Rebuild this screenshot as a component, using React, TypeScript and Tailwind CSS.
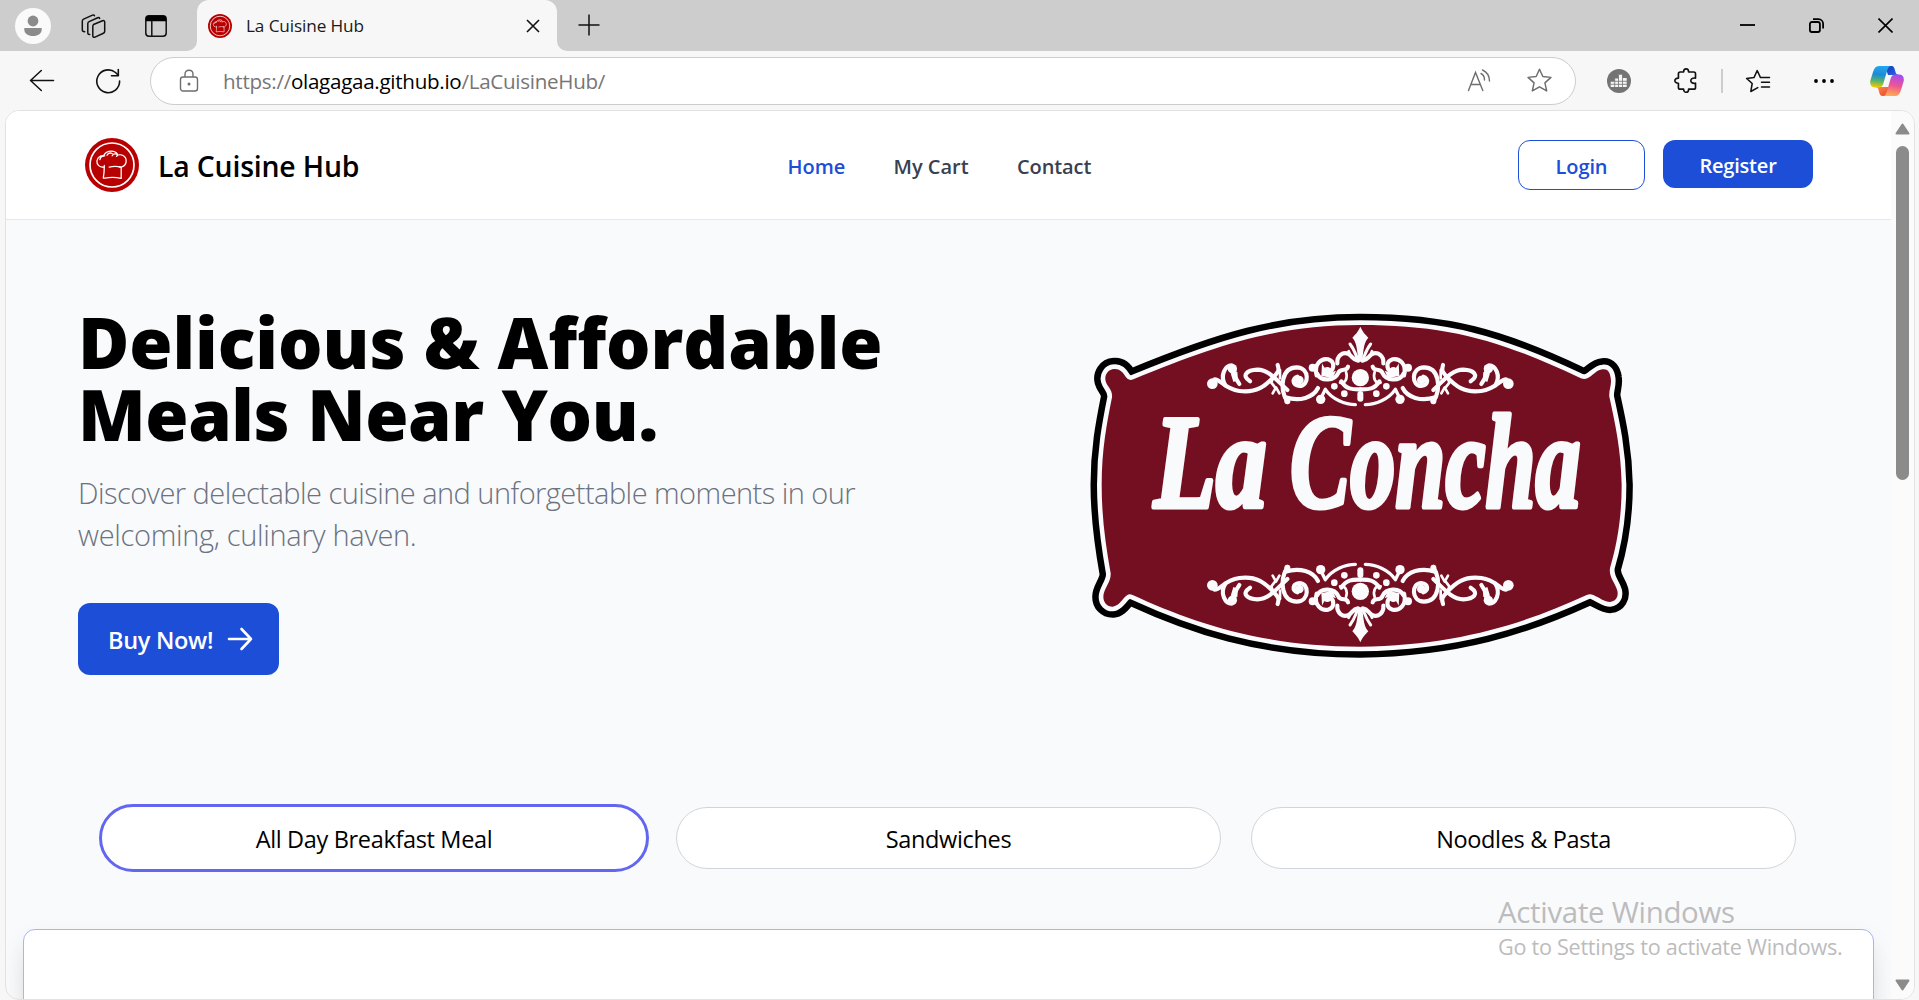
import type { ReactNode } from "react";

function ChefLogo({ className }: { className: string }) {
  return (
    <svg viewBox="0 0 54 54" className={className} fill="none">
      <circle cx="27" cy="27" r="27" fill="#b90000" />
      <circle cx="27" cy="27" r="22" stroke="#fff" strokeWidth="1.700" />
      <g stroke="#fff" strokeWidth="1.300" strokeLinecap="round" strokeLinejoin="round">
        <path d="M19 29.200c-4.500.4-7.400-2.600-7.100-6.100.3-3.800 3.900-6.200 7.800-5.200-2.600.1-4.300 1.600-4.800 3.600" />
        <path d="M18.500 17.800c1.600-3.300 4.700-4.700 8-4.700 3.200 0 5 1.400 6.200 3.400-2.600-1-4.800-.2-5.500 1.300" />
        <path d="M22 17.200c1-2 3.200-2.600 5.200-1.700M31.500 18.300c1.500-1.700 4.600-2 6.900-.5 4.200 2.800 3.500 9.600-1.600 11-1.700.4-2.600.1-2.600.1" />
        <path d="M19.300 27.500c0 5.500-.2 8.500-1 12.600h1.600c5-1 10.500-1 16.300.2V29.200c-4.200-1-8.300-1-12 0" />
      </g>
    </svg>
  );
}

function TitleBar() {
  return (
    <div className="flex h-[51px] shrink-0 items-center bg-[#cdcdcd]">
      <svg viewBox="0 0 36 36" className="ml-[15px] size-9">
        <circle cx="18" cy="18" r="18" fill="#fafafa" />
        <circle cx="18" cy="13" r="5.400" fill="#8b8b8b" />
        <path d="M9.300 20h17.400v1.500c0 4-3.700 6.500-8.700 6.500s-8.700-2.500-8.700-6.500z" fill="#8b8b8b" />
      </svg>
      <svg viewBox="0 0 26 26" className="ml-[29px] size-[26px]" fill="none" stroke="#111" strokeWidth="1.500" strokeLinejoin="round" strokeLinecap="round">
        <path d="M13.500 11.500 22.500 7.700q2.200-.6 2.200 1.500v9q0 1.500-1.300 2.100l-8.400 3.800q-2.200.8-2.200-1.400v-8.900q0-1.600.7-2.300z" />
        <path d="M9.800 21.400q-2 .3-2-1.700v-9q0-1.500 1.300-2.100l8.600-3.900q1.600-.5 2 .7" />
        <path d="M4.700 18.800q-2.400 0-2.400-2V8.200q0-1.500 1.300-2.100l8.900-4q1.500-.5 2 .6" />
      </svg>
      <svg viewBox="0 0 22 22" className="ml-[39px] size-[22px]" fill="none">
        <rect x=".8" y=".8" width="20.400" height="20.400" rx="3.200" stroke="#111" strokeWidth="1.500" />
        <path d="M.8 6.300V4A3.200 3.200 0 0 1 4 .8h14A3.200 3.200 0 0 1 21.200 4v2.300z" fill="#000" />
        <path d="M6.800 6v15" stroke="#111" strokeWidth="1.500" />
      </svg>
      <div className="ml-[20px] flex h-full items-end">
        <svg viewBox="0 0 10 10" className="size-[10px]"><path d="M10 0v10H0A10 10 0 0 0 10 0z" fill="#f7f7f7" /></svg>
        <div className="flex h-full w-[360px] items-center rounded-t-[12px] bg-[#f7f7f7] pr-[17px] pl-[11px]">
          <ChefLogo className="size-6" />
          <span className="ml-[14px] text-[17.200px] tracking-[-0.120px] text-[#1a1a1a]">La Cuisine Hub</span>
          <svg viewBox="0 0 14 14" className="ml-auto size-[14px]" stroke="#111" strokeWidth="1.600"><path d="m1 1 12 12M13 1 1 13" /></svg>
        </div>
        <svg viewBox="0 0 10 10" className="size-[10px]"><path d="M0 0v10h10A10 10 0 0 1 0 0z" fill="#f7f7f7" /></svg>
      </div>
      <svg viewBox="0 0 22 22" className="mb-[2px] ml-[11px] size-[22px]" stroke="#111" strokeWidth="1.500"><path d="M11 .5v21M.5 11h21" /></svg>
      <div className="mr-[26px] ml-auto flex items-center gap-[54px]">
        <svg viewBox="0 0 15 15" className="size-[15px]" stroke="#000" strokeWidth="1.800"><path d="M0 7h15" /></svg>
        <svg viewBox="0 0 15 15" className="size-[15px]" fill="none" stroke="#000" strokeWidth="1.800">
          <rect x=".9" y="4" width="10" height="10" rx="2" />
          <path d="M4 1.200h5.500a4.700 4.700 0 0 1 4.600 4.600V10.500" />
        </svg>
        <svg viewBox="0 0 15 15" className="size-[15px]" stroke="#000" strokeWidth="1.600"><path d="m.5.500 14 14M14.500.500l-14 14" /></svg>
      </div>
    </div>
  );
}

const STAR = "M12 1.200 15.200 8.200 23 9 17.200 14.300 18.900 22 12 18.100 5.100 22 6.800 14.300 1 9 8.800 8.200z";

function Toolbar() {
  return (
    <div className="flex h-[59px] shrink-0 items-center bg-[#f7f7f7]">
      <svg viewBox="0 0 26 24" className="ml-[29px] h-6 w-[26px]" fill="none" stroke="#111" strokeWidth="1.500" strokeLinecap="round" strokeLinejoin="round">
        <path d="M24.500 11.500h-23M12.300 1.500 1.500 11.500l10.800 10" />
      </svg>
      <svg viewBox="0 0 26 26" className="ml-[40px] size-[26px]" fill="none" stroke="#111" strokeWidth="1.600" strokeLinecap="round" strokeLinejoin="round">
        <path d="M24.600 13A11.400 11.400 0 1 1 20.500 4.500L23.300 7.300" />
        <path d="M23.300 1.500v6.200h-6.800" />
      </svg>
      <div className="ml-[29px] flex h-[48px] w-[1426px] items-center rounded-full border-[1.500px] border-[#cdcdcd] bg-white">
        <svg viewBox="0 0 20 24" className="ml-[28px] h-6 w-5" fill="none" stroke="#6e6e6e" strokeWidth="1.400">
          <rect x="1.500" y="8" width="17" height="14" rx="2.500" />
          <path d="M6 8V5.200C6 2.800 7.700 1.200 10 1.200s4 1.600 4 4V8" />
          <circle cx="10" cy="15" r="1.500" fill="#6e6e6e" stroke="none" />
        </svg>
        <div className="mt-[2px] ml-[24px] flex text-[20.600px] tracking-[-0.290px] whitespace-nowrap text-[#767676]">
          <span>https://</span><span className="text-black">olagagaa.github.io</span><span>/LaCuisineHub/</span>
        </div>
        <svg viewBox="0 0 24 24" className="ml-auto size-6" fill="none" stroke="#6e6e6e" strokeWidth="1.400" strokeLinecap="round">
          <path d="M1.500 21.500 8.500 3.500l7.300 18M4 15.500h9.400" />
          <path d="M14 4.500c2.500 1.200 3.500 3.200 3.500 6.500M15.500 1c4.300 1.900 6.800 5.500 7 11" />
        </svg>
        <svg viewBox="0 0 24 24" className="mr-[23px] ml-[36px] size-[25px]" fill="none" stroke="#6e6e6e" strokeWidth="1.400" strokeLinejoin="round"><path d={STAR} /></svg>
      </div>
      <svg viewBox="0 0 24 24" className="ml-[31px] size-6">
        <circle cx="12" cy="12" r="12" fill="#747474" />
        <path d="M3.700 18v-5.300h4V9.600h3.700V5.700h4v3.200h4.300V18z" fill="#f4f4f4" />
        <path d="M3.700 15.300h16.300M7.700 9v9.500M11.500 6v12.500M15.500 6v12.500M7.700 12.300H20" stroke="#747474" strokeWidth=".8" />
      </svg>
      <svg viewBox="0 0 24 24" className="ml-[42px] size-[25px]" fill="none" stroke="#111" strokeWidth="1.600" strokeLinejoin="round">
        <path d="M5.200 5.500q0-1.700 1.700-1.700h3.300c0-4 4.800-4 4.800 0h5q1.600 0 1.600 1.700v4.200c-6 -1-6 6 0 4.900v4q0 1.700-1.600 1.700H15c0 4-4.800 4-4.800 0H6.900q-1.700 0-1.700-1.700v-4c-4.500.2-4.500-5.100 0-4.900z" />
      </svg>
      <div className="ml-[23px] h-6 w-[2px] bg-[#cdcdcd]" />
      <svg viewBox="0 0 26 24" className="ml-[22px] h-6 w-[26px]" fill="none" stroke="#111" strokeWidth="1.500" strokeLinecap="round" strokeLinejoin="round">
        <path d="M17 8.600h-1.500L12.200 1.500 9 8.600l-7.400.8L7.200 14.500 5.800 22.500l7-3.900M17 8.600h7.500M16.500 13.300h8M16.500 18h8" />
      </svg>
      <svg viewBox="0 0 20 4" className="ml-[43px] h-1 w-5"><circle cx="2" cy="2" r="1.900" /><circle cx="10" cy="2" r="1.900" /><circle cx="18" cy="2" r="1.900" /></svg>
      <svg viewBox="0 0 34 30" className="ml-[36px] h-[30px] w-[34px]">
        <defs>
          <linearGradient id="cpA" x1=".5" y1="0" x2=".4" y2="1"><stop offset="0" stopColor="#22a7f0" /><stop offset=".4" stopColor="#1b8bd6" /><stop offset=".7" stopColor="#56b36a" /><stop offset="1" stopColor="#f7c900" /></linearGradient>
          <linearGradient id="cpB" x1=".6" y1="0" x2=".4" y2="1"><stop offset="0" stopColor="#a24cf0" /><stop offset=".5" stopColor="#ee5594" /><stop offset="1" stopColor="#ffae4e" /></linearGradient>
          <linearGradient id="cpC" x1="0" y1="0" x2="1" y2="1"><stop offset="0" stopColor="#1537b8" /><stop offset="1" stopColor="#2a6ae8" /></linearGradient>
          <linearGradient id="cpD" x1="0" y1="0" x2="1" y2="1"><stop offset="0" stopColor="#ff8d3c" /><stop offset="1" stopColor="#e8433a" /></linearGradient>
        </defs>
        <path d="M15 0h6c3 0 3.500 2 4.200 5 .5 2.300 1.300 3.500 3.800 4H18z" fill="url(#cpC)" />
        <path d="M8 21h11l-3 9h-3c-2.800 0-3.500-2-4-4.500-.4-2.300-1-4-3-4.500z" fill="url(#cpD)" />
        <path d="M9 0h12c-2 0-3 2-4 5l-3.500 12c-1 3.500-2.500 4.500-5 4.500H5c-3.500 0-5.600-2.500-4.600-7L3 6C4.300 2 5.800 0 9 0z" fill="url(#cpA)" />
        <path d="M25 30H13c2 0 3-2 4-5l3.500-12c1-3.500 2.500-4.500 5-4.500H29c3.500 0 5.600 2.500 4.600 7L31 24c-1.300 4-2.800 6-6 6z" fill="url(#cpB)" />
      </svg>
    </div>
  );
}

function SiteHeader() {
  return (
    <header className="flex h-[109px] items-center border-b border-[#e5e7eb] bg-white pr-[78px] pl-[79px]">
      <div className="flex w-[702.500px] items-center">
        <ChefLogo className="size-[54px]" />
        <span className="mt-[2px] ml-[19px] text-[28.400px] font-semibold tracking-[-0.180px] text-black">La Cuisine Hub</span>
      </div>
      <nav className="mt-[3px] flex gap-[46px] text-[20px] font-semibold whitespace-nowrap text-[#374151]">
        <a className="w-[60px] text-[#1d4ed8]">Home</a>
        <a className="w-[77.500px]">My Cart</a>
        <a className="tracking-[-0.100px]">Contact</a>
      </nav>
      <div className="ml-auto flex items-start gap-[18px] text-[20px] font-semibold">
        <a className="flex h-[50px] w-[127px] items-center justify-center rounded-xl border border-[#1d4ed8] pt-[3px] tracking-[-0.100px] text-[#1d4ed8]">Login</a>
        <a className="flex h-[48px] w-[150px] items-center justify-center rounded-xl bg-[#1d4ed8] pt-[3px] tracking-[-0.200px] text-white">Register</a>
      </div>
    </header>
  );
}

function OrnamentHalf() {
  return (
    <g transform="translate(360 30)" fill="none" stroke="#fbfbfd" strokeWidth="12.500" strokeLinecap="round" strokeLinejoin="round">
      <path d="M44 208C62 208 72 236 118 243 170 250 196 228 222 200 236 184 238 182 233 165" />
      <path d="M76 226C58 196 76 166 95 166" />
      <path d="M98 172C110 184 98 198 108 206 L118 222" />
      <path d="M150 214C122 196 142 180 172 179 206 180 226 206 262 240" />
      <path d="M222 196 214 218 228 236M218 250 228 232 238 250M240 180 240 205" strokeWidth="8" />
      <path d="M262 276C236 232 246 172 290 172 330 174 328 228 298 228 276 226 276 204 292 200" />
      <path d="M256 262C300 276 340 262 354 234" />
      <path d="M350 196C340 160 366 144 384 148 404 154 404 176 390 184" />
      <path d="M352 192C364 216 404 212 414 190 422 170 440 188 444 170" />
      <path d="M412 160C410 138 428 124 446 132 460 142 458 150 474 152" />
      <path d="M362 266 376 238C396 268 436 284 466 284" strokeWidth="10" />
      <path d="M424 214C440 240 460 238 480 238" />
      <path d="M438 186C444 204 436 222 420 218" strokeWidth="8" />
      <path d="M474 150C468 136 464 120 450 102M476 150C462 148 450 138 446 124" strokeWidth="9" />
      <g fill="#fbfbfd" stroke="none">
        <circle cx="37" cy="221" r="16" /><circle cx="97" cy="176" r="14" /><circle cx="298" cy="210" r="13" />
        <circle cx="338" cy="173" r="12" /><circle cx="362" cy="268" r="14" /><circle cx="403" cy="229" r="10" />
        <circle cx="433" cy="251" r="10" /><circle cx="382" cy="184" r="13" /><circle cx="262" cy="274" r="9" />
        <path d="M366 160c10 22 24 30 42 22l-10 22-34-6zM92 190l20-4 2 24-14 6z" />
      </g>
    </g>
  );
}

function Ornament() {
  return (
    <g>
      <OrnamentHalf />
      <g transform="translate(1682 0) scale(-1 1)"><OrnamentHalf /></g>
      <path d="M841 80c8 18 16 24 24 33-10 12-14 22-18 72h-12c-4-50-8-60-18-72 8-9 16-15 24-33z" fill="#fbfbfd" />
      <circle cx="841" cy="233" r="26" fill="#fbfbfd" />
      <path d="M841 282v14" stroke="#fbfbfd" strokeWidth="18" strokeLinecap="round" />
    </g>
  );
}

const SIGN =
  "M840 75C600 75 420 130 160 238Q146 244 138 232C128 214 116 205 102 207 84 208 72 226 77 244 82 262 98 268 96 292 80 372 65 450 65 555 65 650 76 730 92 820 94 846 70 868 70 890 70 908 82 920 98 920 118 918 126 896 142 885Q148 880 158 885C330 964 540 1040 840 1040 1130 1036 1330 972 1520 885Q1530 880 1540 885C1560 894 1574 906 1590 906 1608 904 1616 890 1612 872 1604 846 1586 832 1590 804 1612 730 1625 650 1625 555 1623 450 1606 372 1588 290 1586 270 1596 254 1592 234 1590 216 1582 206 1568 208 1548 210 1538 228 1522 235Q1510 240 1496 232C1260 120 1100 75 840 75Z";

function ConchaSign() {
  return (
    <svg viewBox="0 0 1700 1110" className="h-[370px] w-[566.700px]">
      <path d={SIGN} fill="#000" stroke="#000" strokeWidth="67" strokeLinejoin="round" />
      <path d={SIGN} fill="#fff" stroke="#fbfbfd" strokeWidth="28" strokeLinejoin="round" />
      <path d={SIGN} fill="#730f20" />
      <Ornament />
      <g transform="translate(0 1107) scale(1 -1)"><Ornament /></g>
      <g className="[font-family:'Liberation_Serif',serif] text-[400px] font-bold italic" fill="#f9fafc" stroke="#f9fafc" strokeWidth="15" strokeLinejoin="round">
        <text x="222" y="622" textLength="338" lengthAdjust="spacingAndGlyphs">La</text>
        <text x="630" y="622" textLength="872" lengthAdjust="spacingAndGlyphs">Concha</text>
      </g>
    </svg>
  );
}

function Hero() {
  return (
    <section className="flex h-[584px] pl-[72px]">
      <div className="w-[1002px] pt-[86px]">
        <h1 className="text-[70px] leading-[72px] font-black whitespace-nowrap text-black">
          <span className="block tracking-[-0.080px]">Delicious &amp; Affordable</span>
          <span className="block tracking-[-0.400px]">Meals Near You.</span>
        </h1>
        <p className="mt-[22px] text-[29px] leading-[42.300px] font-light whitespace-nowrap text-[#6b7280]">
          <span className="block tracking-[-0.540px]">Discover delectable cuisine and unforgettable moments in our</span>
          <span className="block tracking-[-0.320px]">welcoming, culinary haven.</span>
        </p>
        <a className="mt-[46px] flex h-[72px] w-[201px] items-center rounded-xl bg-[#1d4ed8] pl-[30px] text-[23.500px] font-semibold whitespace-nowrap text-white">
          <span className="mt-[4px] w-[119px] tracking-[-0.300px]">Buy Now!</span>
          <svg viewBox="0 0 26 24" className="h-6 w-[26px]" fill="none" stroke="#fff" strokeWidth="2.600" strokeLinecap="round" strokeLinejoin="round"><path d="M2 12h22M14.500 2 24 12l-9.500 10" /></svg>
        </a>
      </div>
      <div className="mt-[80px]"><ConchaSign /></div>
    </section>
  );
}

function Pill({ active, children }: { active?: boolean; children: ReactNode }) {
  return (
    <div
      className={
        active
          ? "-my-[3px] -ml-[3px] flex h-[68px] w-[550px] items-center justify-center rounded-full border-[3px] border-[#6366f1] bg-white pt-[4px]"
          : "flex h-[62px] w-[545px] items-center justify-center rounded-full border border-[#d1d5db] bg-white pt-[4px]"
      }
    >
      {children}
    </div>
  );
}

export default function App() {
  return (
    <div className="flex h-[1000px] w-[1919px] flex-col overflow-hidden bg-[#f7f7f7] [font-family:'Open_Sans',sans-serif]">
      <TitleBar />
      <Toolbar />
      <div className="relative ml-[5px] flex h-[890px] w-[1910px] overflow-hidden rounded-[14px] border border-[#e2e2e2] bg-[#f9fafc]">
        <main className="w-[1885px] overflow-hidden">
          <SiteHeader />
          <Hero />
          <div className="flex h-[125px] items-start pt-[3px] pl-[96px] text-[23.500px] tracking-[-0.340px] text-black">
            <div className="flex w-[574px]"><Pill active>All Day Breakfast Meal</Pill></div>
            <div className="flex w-[575px]"><Pill>Sandwiches</Pill></div>
            <Pill>Noodles &amp; Pasta</Pill>
          </div>
          <div className="mr-[17px] ml-[17px] h-[200px] rounded-xl border border-[#a5b4fc] bg-white shadow-[0_20px_25px_-5px_rgba(0,0,0,0.1),0_8px_24px_rgba(0,0,0,0.06)]" />
        </main>
        <div className="flex w-[23px] flex-col items-center bg-[#fbfbfb] pt-[12px] pb-[8px]">
          <svg viewBox="0 0 15 12" className="h-3 w-[15px]"><path d="M7.500 1.500 13.500 10.500h-12z" fill="#8b8b8b" stroke="#8b8b8b" strokeWidth="2" strokeLinejoin="round" /></svg>
          <div className="mt-[11px] h-[334px] w-[13px] rounded-full bg-[#8b8b8b]" />
          <svg viewBox="0 0 15 12" className="mt-auto h-3 w-[15px]"><path d="M7.500 10.500 13.500 1.500h-12z" fill="#8b8b8b" stroke="#8b8b8b" strokeWidth="2" strokeLinejoin="round" /></svg>
        </div>
        <div className="absolute top-[781px] left-[1492px] whitespace-nowrap text-[#bcbcbc]">
          <div className="text-[29.400px] leading-[40px] tracking-[-0.280px]">Activate Windows</div>
          <div className="-mt-px text-[21.600px] leading-[32px] tracking-[-0.270px]">Go to Settings to activate Windows.</div>
        </div>
      </div>
    </div>
  );
}
